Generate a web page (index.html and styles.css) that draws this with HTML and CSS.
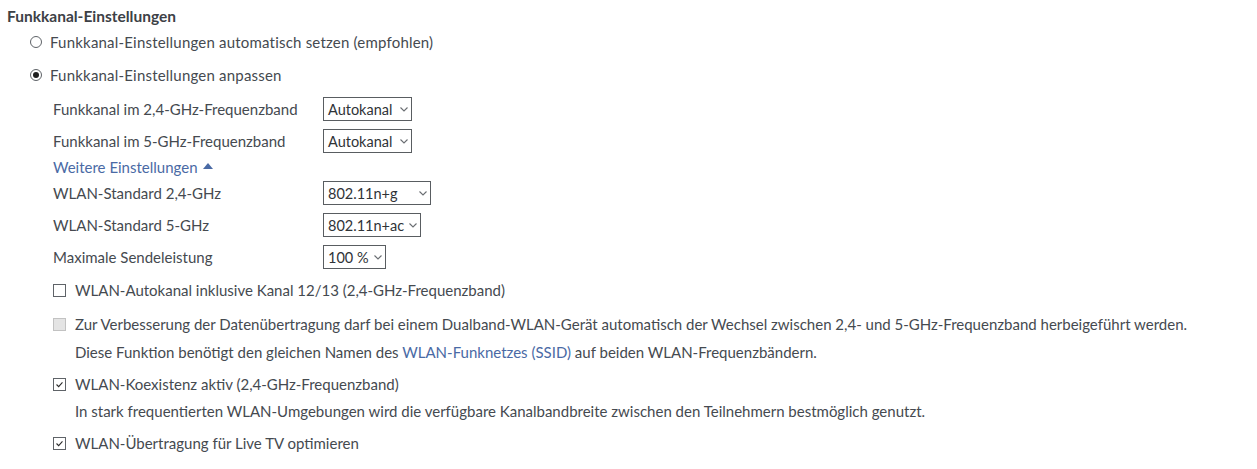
FILE: index.html
```html
<!DOCTYPE html>
<html lang="de">
<head>
<meta charset="utf-8">
<title>Funkkanal-Einstellungen</title>
<link rel="stylesheet" href="styles.css">
</head>
<body>
<div class="page">
  <h2 class="heading">Funkkanal-Einstellungen</h2>

  <div class="radio-row first">
    <span class="radio"></span>
    <span class="label">Funkkanal-Einstellungen automatisch setzen (empfohlen)</span>
  </div>
  <div class="radio-row second">
    <span class="radio checked"></span>
    <span class="label">Funkkanal-Einstellungen anpassen</span>
  </div>

  <div class="sub">
    <div class="field f1">
      <span class="field-label">Funkkanal im 2,4-GHz-Frequenzband</span>
      <span class="select w-auto">Autokanal<svg class="chev" viewBox="0 0 8 5"><path d="M0.5 0.5 L4 4 L7.5 0.5" /></svg></span>
    </div>
    <div class="field f2">
      <span class="field-label">Funkkanal im 5-GHz-Frequenzband</span>
      <span class="select w-auto">Autokanal<svg class="chev" viewBox="0 0 8 5"><path d="M0.5 0.5 L4 4 L7.5 0.5" /></svg></span>
    </div>
    <div class="more">Weitere Einstellungen <svg class="tri" viewBox="0 0 10 6"><path d="M0 6 L5 0 L10 6 Z" /></svg></div>
    <div class="field f3">
      <span class="field-label wide">WLAN-Standard 2,4-GHz</span>
      <span class="select w-std24">802.11n+g<svg class="chev" viewBox="0 0 8 5"><path d="M0.5 0.5 L4 4 L7.5 0.5" /></svg></span>
    </div>
    <div class="field f4">
      <span class="field-label wide">WLAN-Standard 5-GHz</span>
      <span class="select w-std5">802.11n+ac<svg class="chev" viewBox="0 0 8 5"><path d="M0.5 0.5 L4 4 L7.5 0.5" /></svg></span>
    </div>
    <div class="field f5">
      <span class="field-label wide">Maximale Sendeleistung</span>
      <span class="select w-pct">100 %<svg class="chev" viewBox="0 0 8 5"><path d="M0.5 0.5 L4 4 L7.5 0.5" /></svg></span>
    </div>

    <div class="check-row c1">
      <span class="box"></span>
      <span class="label">WLAN-Autokanal inklusive Kanal 12/13 (2,4-GHz-Frequenzband)</span>
    </div>
    <div class="check-row c2">
      <span class="box disabled"></span>
      <span class="label">Zur Verbesserung der Datenübertragung darf bei einem Dualband-WLAN-Gerät automatisch der Wechsel zwischen 2,4- und 5-GHz-Frequenzband herbeigeführt werden.</span>
    </div>
    <div class="hint h1">Diese Funktion benötigt den gleichen Namen des <span class="link">WLAN-Funknetzes (SSID)</span> auf beiden WLAN-Frequenzbändern.</div>
    <div class="check-row c3">
      <span class="box"><svg viewBox="0 0 13 13"><path d="M3 6.5 L5.5 9 L10 4" /></svg></span>
      <span class="label">WLAN-Koexistenz aktiv (2,4-GHz-Frequenzband)</span>
    </div>
    <div class="hint h2">In stark frequentierten WLAN-Umgebungen wird die verfügbare Kanalbandbreite zwischen den Teilnehmern bestmöglich genutzt.</div>
    <div class="check-row c4">
      <span class="box"><svg viewBox="0 0 13 13"><path d="M3 6.5 L5.5 9 L10 4" /></svg></span>
      <span class="label">WLAN-Übertragung für Live TV optimieren</span>
    </div>
  </div>
</div>
</body>
</html>
```

FILE: styles.css
```css
html, body {
  margin: 0;
  padding: 0;
  background: #ffffff;
}

.page {
  font-family: Lato, "Open Sans", sans-serif;
  font-size: 15px;
  color: #454a50;
  padding: 6px 0 0 7px;
  display: flex;
  flex-direction: column;
}

.heading {
  margin: 0;
  font-size: 15.5px;
  font-weight: 700;
  line-height: 20px;
  color: #3d4146;
}

.radio-row {
  display: flex;
  align-items: center;
  height: 20px;
  line-height: 20px;
  padding-left: 23px;
}
.radio-row.first { margin-top: 6px; }
.radio-row.second { margin-top: 13px; }

.radio-row .label { letter-spacing: 0.2px; }

.radio {
  border: 1px solid #5f6368;
  border-radius: 50%;
  box-sizing: border-box;
  width: 12px;
  height: 12px;
  margin-right: 8px;
  display: flex;
  align-items: center;
  justify-content: center;
  flex: none;
}
.radio.checked::after {
  content: "";
  width: 6px;
  height: 6px;
  border-radius: 50%;
  background: #1e1e1e;
}

.sub {
  display: flex;
  flex-direction: column;
  padding-left: 46px;
}

.field {
  display: flex;
  align-items: center;
  height: 24px;
}
.f1 { margin-top: 12px; }
.f2 { margin-top: 8px; }
.f3 { margin-top: 4px; }
.f4 { margin-top: 8px; }
.f5 { margin-top: 8px; }

.field-label {
  width: 270px;
  flex: none;
}

.select {
  display: flex;
  align-items: center;
  justify-content: space-between;
  box-sizing: border-box;
  height: 24px;
  border: 1px solid #595d61;
  padding: 0 3px 0 4px;
  font-size: 14.5px;
  color: #2f3337;
  background: #fff;
}
.w-auto { width: 89px; }
.w-std24 { width: 108px; }
.w-std5 { width: 98px; }
.w-pct { width: 63px; }

.chev {
  width: 8px;
  height: 5px;
  margin-left: 2px;
  flex: none;
}
.chev path {
  fill: none;
  stroke: #6a6e72;
  stroke-width: 1.1;
}

.more {
  margin-top: 4px;
  height: 20px;
  line-height: 20px;
  color: #4a6aa5;
  display: flex;
  align-items: center;
}
.tri {
  width: 10px;
  height: 6px;
  margin-left: 5px;
  margin-top: -2px;
}
.tri path { fill: #4a6aa5; }

.check-row {
  display: flex;
  align-items: center;
  height: 20px;
  line-height: 20px;
}
.c1 { margin-top: 11px; }
.c2 { margin-top: 14px; }
.c3 { margin-top: 12px; }
.c4 { margin-top: 12px; }

.box {
  width: 13px;
  height: 13px;
  box-sizing: border-box;
  border: 1px solid #5f6368;
  margin-right: 9px;
  flex: none;
  display: flex;
}
.box svg {
  width: 11px;
  height: 11px;
}
.box svg path {
  fill: none;
  stroke: #2b2b2b;
  stroke-width: 1.3;
}
.box.disabled {
  background: #e4e4e4;
  border-color: #c2c2c2;
}

.hint {
  height: 20px;
  line-height: 20px;
  padding-left: 22px;
}
.h1 { margin-top: 8px; }
.h2 { margin-top: 7px; }

.link { color: #4a6aa5; }
```
